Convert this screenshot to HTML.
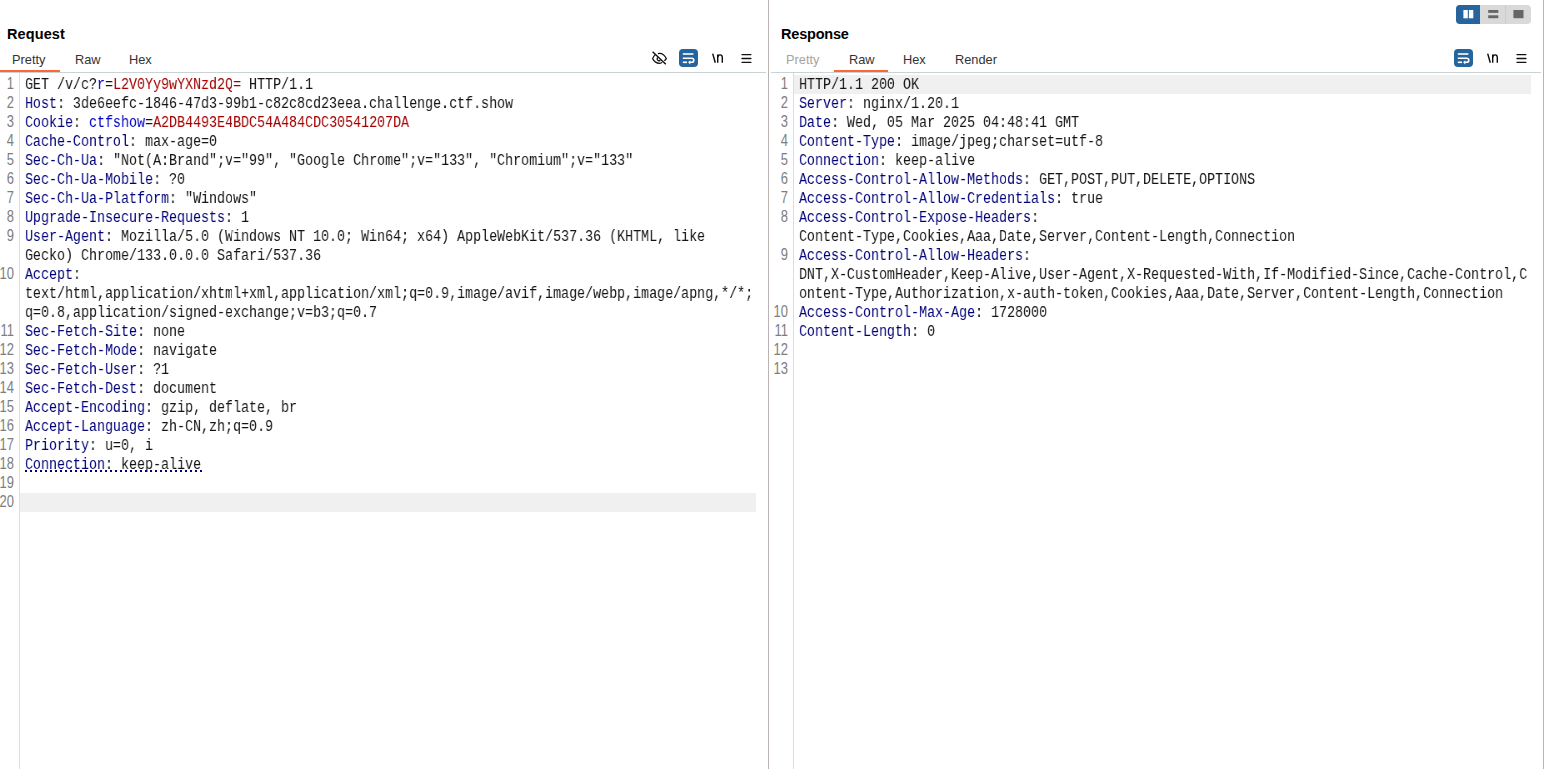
<!DOCTYPE html>
<html>
<head>
<meta charset="utf-8">
<title>Repeater</title>
<style>
html,body{margin:0;padding:0;background:#fff;}
body{width:1545px;height:769px;position:relative;overflow:hidden;font-family:"Liberation Sans",sans-serif;color:#1a1a1a;}
.abs{position:absolute;}
.title{position:absolute;top:25px;font-weight:bold;font-size:14.5px;line-height:18px;color:#000;white-space:nowrap;}
.tab{position:absolute;top:52px;font-size:12.8px;line-height:16px;color:#333;white-space:nowrap;}
.tab.dis{color:#a4a4a4;}
.hline{position:absolute;top:72px;height:1px;background:#cbd2d4;}
.orange{position:absolute;top:70px;height:2px;background:#ff6633;}
.vline{position:absolute;top:0;width:1px;height:769px;}
.gline{position:absolute;top:73px;width:1px;height:696px;background:#dddddd;}
.nums{position:absolute;top:75px;text-align:right;font-size:16px;color:#7e7e7e;transform:scaleX(0.81);transform-origin:100% 0;}
.nums .n{height:19px;line-height:17px;}
.code{position:absolute;top:75px;font-family:"Liberation Mono",monospace;font-size:16px;color:#222;transform:scaleX(0.83333);transform-origin:0 0;will-change:transform;}
.row{height:19px;line-height:21px;white-space:pre;padding-left:6px;}
.row.hl{background:#f0f0f0;}
.h{color:#000078;}
.p{color:#0000c4;}
.v{color:#a40000;}
.t{color:#141414;}
.u{}
.dots{position:absolute;height:2px;background:repeating-linear-gradient(to right,#000080 0,#000080 2px,transparent 2px,transparent 5px);}
</style>
</head>
<body>

<!-- panel dividers -->
<div class="vline" style="left:768px;background:#bab3b3;"></div>
<div class="vline" style="left:1543px;background:#bab3b3;"></div>

<!-- ===== REQUEST ===== -->
<div class="title" style="left:7px;letter-spacing:0.1px;">Request</div>
<div class="tab" style="left:12px;">Pretty</div>
<div class="tab" style="left:75px;">Raw</div>
<div class="tab" style="left:129px;">Hex</div>
<div class="hline" style="left:0;width:766px;"></div>
<div class="orange" style="left:0;width:60px;"></div>

<!-- request toolbar icons -->
<svg class="abs" style="left:650px;top:49px;" width="19" height="18" viewBox="0 0 19 18" fill="none" stroke="#0c0c0c" stroke-width="1.2" stroke-linecap="butt">
  <path d="M5.3 5.6 C4.1 6.7 3.1 8.2 2.6 9.6 C4.2 12.5 6.6 14.3 9.5 14.3 C10.5 14.3 11.4 14.1 12.2 13.6"/>
  <path d="M7.9 4.6 C8.4 4.4 9 4.3 9.5 4.3 C12.4 4.3 14.8 6.3 16.3 9.6 C15.8 10.5 15.1 11.2 14.3 11.7"/>
  <path d="M7.7 8.5 A1.85 1.85 0 0 0 10.3 11.2"/>
  <path d="M2.6 2.8 L15.8 15.2" stroke-width="1.4"/>
</svg>
<div class="abs" style="left:679px;top:49px;width:19px;height:18px;border-radius:4px;background:#26649d;"></div>
<svg class="abs" style="left:679px;top:49px;" width="19" height="18" viewBox="0 0 19 18" fill="none" stroke="#fff" stroke-width="1.6">
  <path d="M3.8 5 H14.4"/>
  <path d="M3.8 9.2 H12.7 A2.05 2.05 0 0 1 12.7 13.3 H10.8"/>
  <path d="M3.8 13.3 H8"/>
  <path d="M11.3 11.2 L9.1 13.3 L11.3 15.4 Z" fill="#fff" stroke="none"/>
</svg>
<svg class="abs" style="left:711px;top:49px;" width="16" height="18" viewBox="0 0 16 18" fill="none" stroke="#0c0c0c" stroke-width="1.4">
  <path d="M1.7 4.6 L4.3 13.8"/>
  <path d="M6.7 5.5 V13.8"/>
  <path d="M6.7 8.4 C6.7 6.4 8 5.9 9.1 5.9 C10.5 5.9 11.3 6.8 11.3 8.6 V13.8"/>
</svg>
<svg class="abs" style="left:740px;top:49px;" width="15" height="18" viewBox="0 0 15 18" fill="none" stroke="#111" stroke-width="1.35" stroke-linecap="round">
  <path d="M2 5.6 H10.9 M2 9.5 H10.9 M2 13.3 H10.9"/>
</svg>

<div class="gline" style="left:19px;"></div>
<div class="nums" style="left:-6px;width:20px;">
<div class="n">1</div>
<div class="n">2</div>
<div class="n">3</div>
<div class="n">4</div>
<div class="n">5</div>
<div class="n">6</div>
<div class="n">7</div>
<div class="n">8</div>
<div class="n">9</div>
<div class="n"></div>
<div class="n">10</div>
<div class="n"></div>
<div class="n"></div>
<div class="n">11</div>
<div class="n">12</div>
<div class="n">13</div>
<div class="n">14</div>
<div class="n">15</div>
<div class="n">16</div>
<div class="n">17</div>
<div class="n">18</div>
<div class="n">19</div>
<div class="n">20</div>
</div>
<div class="code" style="left:20px;width:883.2px;">
<div class="row"><span class="t">GET /v/c?</span><span class="p">r</span><span class="t">=</span><span class="v">L2V0Yy9wYXNzd2Q=</span><span class="t"> HTTP/1.1</span></div>
<div class="row"><span class="h">Host</span><span class="t">: 3de6eefc-1846-47d3-99b1-c82c8cd23eea.challenge.ctf.show</span></div>
<div class="row"><span class="h">Cookie</span><span class="t">: </span><span class="p">ctfshow</span><span class="t">=</span><span class="v">A2DB4493E4BDC54A484CDC30541207DA</span></div>
<div class="row"><span class="h">Cache-Control</span><span class="t">: max-age=0</span></div>
<div class="row"><span class="h">Sec-Ch-Ua</span><span class="t">: "Not(A:Brand";v="99", "Google Chrome";v="133", "Chromium";v="133"</span></div>
<div class="row"><span class="h">Sec-Ch-Ua-Mobile</span><span class="t">: ?0</span></div>
<div class="row"><span class="h">Sec-Ch-Ua-Platform</span><span class="t">: "Windows"</span></div>
<div class="row"><span class="h">Upgrade-Insecure-Requests</span><span class="t">: 1</span></div>
<div class="row"><span class="h">User-Agent</span><span class="t">: Mozilla/5.0 (Windows NT 10.0; Win64; x64) AppleWebKit/537.36 (KHTML, like</span></div>
<div class="row"><span class="t">Gecko) Chrome/133.0.0.0 Safari/537.36</span></div>
<div class="row"><span class="h">Accept</span><span class="t">:</span></div>
<div class="row"><span class="t">text/html,application/xhtml+xml,application/xml;q=0.9,image/avif,image/webp,image/apng,*/*;</span></div>
<div class="row"><span class="t">q=0.8,application/signed-exchange;v=b3;q=0.7</span></div>
<div class="row"><span class="h">Sec-Fetch-Site</span><span class="t">: none</span></div>
<div class="row"><span class="h">Sec-Fetch-Mode</span><span class="t">: navigate</span></div>
<div class="row"><span class="h">Sec-Fetch-User</span><span class="t">: ?1</span></div>
<div class="row"><span class="h">Sec-Fetch-Dest</span><span class="t">: document</span></div>
<div class="row"><span class="h">Accept-Encoding</span><span class="t">: gzip, deflate, br</span></div>
<div class="row"><span class="h">Accept-Language</span><span class="t">: zh-CN,zh;q=0.9</span></div>
<div class="row"><span class="h">Priority</span><span class="t">: u=0, i</span></div>
<div class="row"><span class="u"><span class="h">Connection</span><span class="t">: keep-alive</span></span></div>
<div class="row"></div>
<div class="row hl"></div>
</div>

<div class="dots" style="left:25px;top:470px;width:177px;"></div>

<!-- ===== RESPONSE ===== -->
<div class="title" style="left:781px;letter-spacing:-0.2px;">Response</div>
<div class="tab dis" style="left:786px;">Pretty</div>
<div class="tab" style="left:849px;">Raw</div>
<div class="tab" style="left:903px;">Hex</div>
<div class="tab" style="left:955px;">Render</div>
<div class="hline" style="left:771px;width:770px;"></div>
<div class="orange" style="left:834px;width:54px;"></div>

<!-- layout switcher -->
<svg class="abs" style="left:1456px;top:5px;" width="75" height="19" viewBox="0 0 75 19">
  <defs><clipPath id="swc"><rect x="0" y="0" width="75" height="19" rx="4" ry="4"/></clipPath></defs>
  <g clip-path="url(#swc)">
    <rect x="0" y="0" width="75" height="19" fill="#d9d9d9"/>
    <rect x="0" y="0" width="24" height="19" fill="#26649d"/>
    <rect x="49" y="0" width="1" height="19" fill="#cbcbcb"/>
  </g>
  <rect x="7.4" y="5" width="4.4" height="8.3" fill="#fff"/>
  <rect x="12.9" y="5" width="4.4" height="8.3" fill="#fff"/>
  <rect x="32.2" y="5" width="10.1" height="2.9" fill="#666668"/>
  <rect x="32.2" y="10.3" width="10.1" height="2.9" fill="#666668"/>
  <rect x="57.4" y="5" width="10.1" height="8.2" fill="#666668"/>
</svg>

<!-- response toolbar icons -->
<div class="abs" style="left:1454px;top:49px;width:19px;height:18px;border-radius:4px;background:#26649d;"></div>
<svg class="abs" style="left:1454px;top:49px;" width="19" height="18" viewBox="0 0 19 18" fill="none" stroke="#fff" stroke-width="1.6">
  <path d="M3.8 5 H14.4"/>
  <path d="M3.8 9.2 H12.7 A2.05 2.05 0 0 1 12.7 13.3 H10.8"/>
  <path d="M3.8 13.3 H8"/>
  <path d="M11.3 11.2 L9.1 13.3 L11.3 15.4 Z" fill="#fff" stroke="none"/>
</svg>
<svg class="abs" style="left:1486px;top:49px;" width="16" height="18" viewBox="0 0 16 18" fill="none" stroke="#0c0c0c" stroke-width="1.4">
  <path d="M1.7 4.6 L4.3 13.8"/>
  <path d="M6.7 5.5 V13.8"/>
  <path d="M6.7 8.4 C6.7 6.4 8 5.9 9.1 5.9 C10.5 5.9 11.3 6.8 11.3 8.6 V13.8"/>
</svg>
<svg class="abs" style="left:1515px;top:49px;" width="15" height="18" viewBox="0 0 15 18" fill="none" stroke="#111" stroke-width="1.35" stroke-linecap="round">
  <path d="M2 5.6 H10.9 M2 9.5 H10.9 M2 13.3 H10.9"/>
</svg>

<div class="gline" style="left:793px;"></div>
<div class="nums" style="left:768px;width:20px;">
<div class="n">1</div>
<div class="n">2</div>
<div class="n">3</div>
<div class="n">4</div>
<div class="n">5</div>
<div class="n">6</div>
<div class="n">7</div>
<div class="n">8</div>
<div class="n"></div>
<div class="n">9</div>
<div class="n"></div>
<div class="n"></div>
<div class="n">10</div>
<div class="n">11</div>
<div class="n">12</div>
<div class="n">13</div>
</div>
<div class="code" style="left:794px;width:884.4px;">
<div class="row hl"><span class="t">HTTP/1.1 200 OK</span></div>
<div class="row"><span class="h">Server</span><span class="t">: nginx/1.20.1</span></div>
<div class="row"><span class="h">Date</span><span class="t">: Wed, 05 Mar 2025 04:48:41 GMT</span></div>
<div class="row"><span class="h">Content-Type</span><span class="t">: image/jpeg;charset=utf-8</span></div>
<div class="row"><span class="h">Connection</span><span class="t">: keep-alive</span></div>
<div class="row"><span class="h">Access-Control-Allow-Methods</span><span class="t">: GET,POST,PUT,DELETE,OPTIONS</span></div>
<div class="row"><span class="h">Access-Control-Allow-Credentials</span><span class="t">: true</span></div>
<div class="row"><span class="h">Access-Control-Expose-Headers</span><span class="t">:</span></div>
<div class="row"><span class="t">Content-Type,Cookies,Aaa,Date,Server,Content-Length,Connection</span></div>
<div class="row"><span class="h">Access-Control-Allow-Headers</span><span class="t">:</span></div>
<div class="row"><span class="t">DNT,X-CustomHeader,Keep-Alive,User-Agent,X-Requested-With,If-Modified-Since,Cache-Control,C</span></div>
<div class="row"><span class="t">ontent-Type,Authorization,x-auth-token,Cookies,Aaa,Date,Server,Content-Length,Connection</span></div>
<div class="row"><span class="h">Access-Control-Max-Age</span><span class="t">: 1728000</span></div>
<div class="row"><span class="h">Content-Length</span><span class="t">: 0</span></div>
<div class="row"></div>
<div class="row"></div>
</div>

</body>
</html>
